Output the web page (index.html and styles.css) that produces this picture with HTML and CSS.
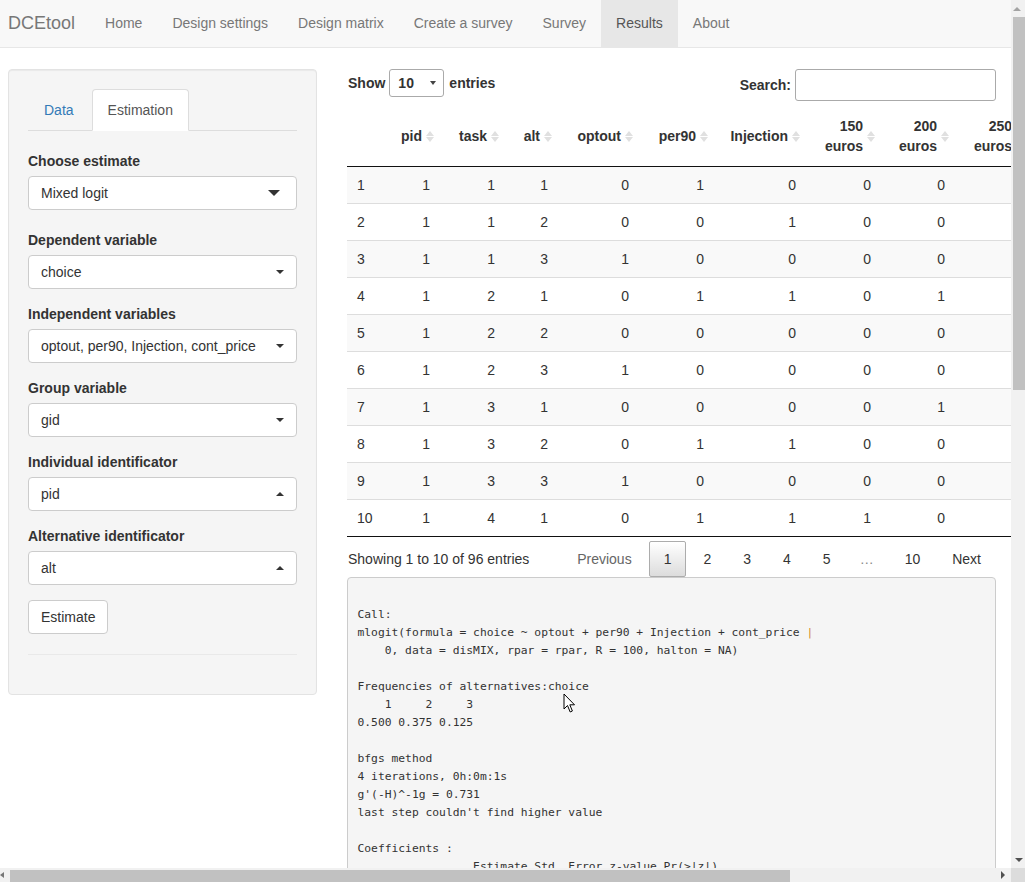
FILE: index.html
```html
<!DOCTYPE html>
<html lang="en">
<head>
<meta charset="utf-8">
<title>DCEtool</title>
<link rel="stylesheet" href="styles.css">
</head>
<body>
<div class="screen">
  <div class="viewport">
    <nav class="navbar">
      <span class="brand">DCEtool</span>
      <ul class="nav">
        <li class="nav-link">Home</li>
        <li class="nav-link">Design settings</li>
        <li class="nav-link">Design matrix</li>
        <li class="nav-link">Create a survey</li>
        <li class="nav-link">Survey</li>
        <li class="nav-link active">Results</li>
        <li class="nav-link">About</li>
      </ul>
    </nav>

    <div class="layout">
      <aside class="well">
        <ul class="tabs">
          <li class="tab">Data</li>
          <li class="tab active">Estimation</li>
        </ul>
        <div class="tab-content">
          <div class="form-group first">
            <label class="control-label">Choose estimate</label>
            <div class="select"><span>Mixed logit</span><span class="caret big"></span></div>
          </div>
          <div class="form-group">
            <label class="control-label">Dependent variable</label>
            <div class="select"><span>choice</span><span class="caret"></span></div>
          </div>
          <div class="form-group">
            <label class="control-label">Independent variables</label>
            <div class="select"><span>optout, per90, Injection, cont_price</span><span class="caret"></span></div>
          </div>
          <div class="form-group">
            <label class="control-label">Group variable</label>
            <div class="select"><span>gid</span><span class="caret"></span></div>
          </div>
          <div class="form-group">
            <label class="control-label">Individual identificator</label>
            <div class="select"><span>pid</span><span class="caret up"></span></div>
          </div>
          <div class="form-group">
            <label class="control-label">Alternative identificator</label>
            <div class="select"><span>alt</span><span class="caret up"></span></div>
          </div>
          <button class="btn" type="button">Estimate</button>
          <hr class="rule">
        </div>
      </aside>

      <main class="main">
        <div class="dt-top">
          <div class="dt-length">
            <span>Show</span>
            <div class="len-select"><span>10</span><span class="mini-caret"></span></div>
            <span>entries</span>
          </div>
          <div class="dt-filter">
            <span>Search:</span>
            <div class="search-input"></div>
          </div>
        </div>

        <table class="dt-table">
          <colgroup>
            <col class="w37"><col class="w56"><col class="w65"><col class="w53"><col class="w81"><col class="w75"><col class="w92"><col class="w75"><col class="w74"><col class="w75">
          </colgroup>
          <thead>
            <tr>
              <th class="rn"></th>
              <th>pid<span class="sort"></span></th>
              <th>task<span class="sort"></span></th>
              <th>alt<span class="sort"></span></th>
              <th>optout<span class="sort"></span></th>
              <th>per90<span class="sort"></span></th>
              <th>Injection<span class="sort"></span></th>
              <th>150 euros<span class="sort"></span></th>
              <th>200 euros<span class="sort"></span></th>
              <th>250 euros<span class="sort"></span></th>
            </tr>
          </thead>
          <tbody>
            <tr class="odd"><td class="rn">1</td><td>1</td><td>1</td><td>1</td><td>0</td><td>1</td><td>0</td><td>0</td><td>0</td><td>0</td></tr>
            <tr><td class="rn">2</td><td>1</td><td>1</td><td>2</td><td>0</td><td>0</td><td>1</td><td>0</td><td>0</td><td>1</td></tr>
            <tr class="odd"><td class="rn">3</td><td>1</td><td>1</td><td>3</td><td>1</td><td>0</td><td>0</td><td>0</td><td>0</td><td>0</td></tr>
            <tr><td class="rn">4</td><td>1</td><td>2</td><td>1</td><td>0</td><td>1</td><td>1</td><td>0</td><td>1</td><td>0</td></tr>
            <tr class="odd"><td class="rn">5</td><td>1</td><td>2</td><td>2</td><td>0</td><td>0</td><td>0</td><td>0</td><td>0</td><td>0</td></tr>
            <tr><td class="rn">6</td><td>1</td><td>2</td><td>3</td><td>1</td><td>0</td><td>0</td><td>0</td><td>0</td><td>0</td></tr>
            <tr class="odd"><td class="rn">7</td><td>1</td><td>3</td><td>1</td><td>0</td><td>0</td><td>0</td><td>0</td><td>1</td><td>0</td></tr>
            <tr><td class="rn">8</td><td>1</td><td>3</td><td>2</td><td>0</td><td>1</td><td>1</td><td>0</td><td>0</td><td>1</td></tr>
            <tr class="odd"><td class="rn">9</td><td>1</td><td>3</td><td>3</td><td>1</td><td>0</td><td>0</td><td>0</td><td>0</td><td>0</td></tr>
            <tr><td class="rn">10</td><td>1</td><td>4</td><td>1</td><td>0</td><td>1</td><td>1</td><td>1</td><td>0</td><td>0</td></tr>
          </tbody>
        </table>

        <div class="dt-bottom">
          <div class="dt-info">Showing 1 to 10 of 96 entries</div>
          <div class="paginate">
            <span class="pg disabled">Previous</span>
            <span class="pg current">1</span>
            <span class="pg">2</span>
            <span class="pg">3</span>
            <span class="pg">4</span>
            <span class="pg">5</span>
            <span class="ellipsis">…</span>
            <span class="pg">10</span>
            <span class="pg">Next</span>
          </div>
        </div>

<pre class="output">

Call:
mlogit(formula = choice ~ optout + per90 + Injection + cont_price <span class="bar">|</span>
    0, data = disMIX, rpar = rpar, R = 100, halton = NA)

Frequencies of alternatives:choice
    1     2     3
0.500 0.375 0.125

bfgs method
4 iterations, 0h:0m:1s
g'(-H)^-1g = 0.731
last step couldn't find higher value

Coefficients :
                 Estimate Std. Error z-value Pr(&gt;|z|)
optout          -1.602521   0.585913 -2.7351  0.006236 **
per90            0.871425   0.412308  2.1135  0.034556 *
Injection        0.512874   0.398164  1.2881  0.197707
cont_price      -0.004519   0.002187 -2.0663  0.038799 *
</pre>
      </main>
    </div>
  </div>

  <div class="vscroll">
    <div class="sb-btn"><span class="tri-up"></span></div>
    <div class="vthumb"></div>
    <div class="sb-fill"></div>
    <div class="sb-btn"><span class="tri-down"></span></div>
  </div>
  <div class="hscroll">
    <span class="tri-left"></span>
    <div class="hthumb"></div>
    <div class="sb-fill"></div>
    <span class="tri-right"></span>
  </div>
  <div class="corner"></div>

  <svg class="cursor" width="14" height="21" viewBox="0 0 14 21" aria-hidden="true">
    <path d="M1 1 L1 16 L4.5 12.5 L7.2 19 L9.4 18 L6.8 11.8 L11.5 11.8 Z" fill="#fff" stroke="#000" stroke-width="1" stroke-linejoin="miter"/>
  </svg>
</div>
</body>
</html>
```

FILE: styles.css
```css
* { box-sizing: border-box; }

html, body {
  margin: 0;
  padding: 0;
}

body {
  font-family: "Liberation Sans", Arial, Helvetica, sans-serif;
  font-size: 14px;
  line-height: 20px;
  color: #333;
  background: #fff;
  overflow: hidden;
}

.screen {
  position: relative;
  display: grid;
  grid-template-columns: 1011px 14px;
  grid-template-rows: 868px 14px;
  width: 1025px;
  height: 882px;
}

.viewport {
  overflow: hidden;
  background: #fff;
}

/* navbar */
.navbar {
  display: flex;
  height: 48px;
  padding-bottom: 1px;
  background: #f8f8f8;
  border-bottom: 1px solid #e7e7e7;
}

.brand {
  display: flex;
  align-items: center;
  padding: 0 15px 0 8px;
  font-size: 18px;
  color: #777;
}

.nav {
  display: flex;
  list-style: none;
  margin: 0 0 -1px;
  padding: 0;
}

.nav-link {
  display: flex;
  align-items: center;
  padding: 0 15px 1px;
  color: #777;
}

.nav-link.active {
  background: #e7e7e7;
  color: #555;
}

/* layout */
.layout {
  display: flex;
  align-items: flex-start;
  gap: 30px;
  padding: 21px 0 0 8px;
}

.well {
  flex: none;
  width: 309px;
  padding: 19px;
  background: #f5f5f5;
  border: 1px solid #e3e3e3;
  border-radius: 4px;
  box-shadow: inset 0 1px 1px rgba(0, 0, 0, 0.05);
}

.tabs {
  display: flex;
  list-style: none;
  margin: 0;
  padding: 0;
  border-bottom: 1px solid #ddd;
}

.tab {
  padding: 10px 15px;
  margin-right: 2px;
  margin-bottom: -1px;
  border: 1px solid transparent;
  border-radius: 4px 4px 0 0;
  color: #337ab7;
}

.tab.active {
  background: #fff;
  border-color: #ddd #ddd transparent;
  color: #555;
}

.tab-content {
  padding-top: 20px;
}

.form-group {
  margin-bottom: 15px;
}

.form-group.first {
  margin-bottom: 20px;
}

.control-label {
  display: block;
  margin-bottom: 5px;
  font-weight: bold;
}

.select {
  display: flex;
  align-items: center;
  justify-content: space-between;
  height: 34px;
  padding: 6px 12px;
  background: #fff;
  border: 1px solid #ccc;
  border-radius: 4px;
  color: #333;
}

.caret {
  width: 0;
  height: 0;
  border-left: 4px solid transparent;
  border-right: 4px solid transparent;
  border-top: 4px solid #333;
}

.caret.big {
  margin-right: 4px;
  border-left-width: 6px;
  border-right-width: 6px;
  border-top-width: 6px;
}

.caret.up {
  border-top: 0;
  border-bottom: 4px solid #333;
}

.btn {
  display: block;
  height: 34px;
  padding: 6px 12px;
  font-family: inherit;
  font-size: 14px;
  line-height: 20px;
  color: #333;
  background: #fff;
  border: 1px solid #ccc;
  border-radius: 4px;
}

.rule {
  margin: 20px 0;
  border: 0;
  border-top: 1px solid #e9e9e9;
}

/* main */
.main {
  flex: none;
  width: 649px;
}

.dt-top {
  display: flex;
  justify-content: space-between;
  align-items: flex-start;
}

.dt-length {
  display: flex;
  align-items: center;
  height: 28px;
  padding-left: 1px;
  font-weight: bold;
}

.len-select {
  display: flex;
  align-items: center;
  justify-content: space-between;
  width: 55px;
  height: 28px;
  margin: 0 5px 0 4px;
  padding: 0 7px 0 8px;
  border: 1px solid #aaa;
  border-radius: 3px;
  background: #fff;
}

.mini-caret {
  width: 0;
  height: 0;
  border-left: 3px solid transparent;
  border-right: 3px solid transparent;
  border-top: 4px solid #444;
}

.dt-filter {
  display: flex;
  align-items: center;
  font-weight: bold;
}

.search-input {
  width: 201px;
  height: 32px;
  margin-left: 4px;
  background: #fff;
  border: 1px solid #aaa;
  border-radius: 3px;
}

.dt-table {
  margin-top: 5px;
  width: 683px;
  table-layout: fixed;
  border-collapse: separate;
  border-spacing: 0;
}

.w37 { width: 37px; }
.w53 { width: 53px; }
.w56 { width: 56px; }
.w65 { width: 65px; }
.w74 { width: 74px; }
.w75 { width: 75px; }
.w81 { width: 81px; }
.w92 { width: 92px; }

.dt-table th {
  position: relative;
  padding: 10px 18px 10px 10px;
  font-weight: bold;
  text-align: right;
  vertical-align: middle;
  border-bottom: 1px solid #111;
}

.dt-table th.rn,
.dt-table td.rn {
  text-align: left;
}

.dt-table td {
  padding: 8px 10px;
  text-align: right;
  border-top: 1px solid #ddd;
  white-space: nowrap;
}

.dt-table tbody tr:first-child td {
  border-top: 0;
}

.dt-table tbody tr:last-child td {
  border-bottom: 1px solid #111;
}

.dt-table tr.odd td {
  background: #f9f9f9;
}

.sort {
  position: absolute;
  right: 6px;
  top: 50%;
  width: 8px;
  height: 11px;
  margin-top: -5px;
}

.sort::before,
.sort::after {
  content: "";
  position: absolute;
  left: 0;
  width: 0;
  height: 0;
  border-left: 4px solid transparent;
  border-right: 4px solid transparent;
}

.sort::before {
  top: 0;
  border-bottom: 5px solid #e0e0e0;
}

.sort::after {
  bottom: 0;
  border-top: 5px solid #e0e0e0;
}

.dt-bottom {
  display: flex;
  justify-content: space-between;
  align-items: center;
  padding-top: 4px;
}

.dt-info {
  padding-left: 1px;
}

.paginate {
  display: flex;
  align-items: center;
}

.pg {
  min-width: 21px;
  margin-left: 2px;
  padding: 7px 14px;
  text-align: center;
  color: #333;
  border: 1px solid transparent;
  border-radius: 2px;
}

.pg.disabled {
  color: #666;
}

.pg.current {
  border-color: #acacac;
  background: linear-gradient(to bottom, #fff 0%, #dcdcdc 100%);
}

.ellipsis {
  padding: 0 14px;
  color: #888;
}

.output {
  margin: 0;
  padding: 9.5px;
  font-family: "DejaVu Sans Mono", "Liberation Mono", monospace;
  font-size: 11.3px;
  line-height: 18px;
  color: #333;
  background: #f5f5f5;
  border: 1px solid #ccc;
  border-radius: 4px;
  white-space: pre;
  overflow: hidden;
}

.bar {
  color: #d58a1e;
}

/* scrollbars */
.vscroll {
  display: flex;
  flex-direction: column;
  align-items: flex-end;
  background: #f1f1f1;
}

.sb-btn {
  display: flex;
  align-items: center;
  justify-content: center;
  width: 14px;
  height: 17px;
  flex: none;
}

.vthumb {
  width: 12px;
  height: 373px;
  background: #c1c1c1;
  flex: none;
}

.sb-fill {
  flex: 1;
}

.tri-up {
  width: 0;
  height: 0;
  border-left: 4px solid transparent;
  border-right: 4px solid transparent;
  border-bottom: 4px solid #a3a3a3;
  margin-left: -2px;
}

.tri-down {
  width: 0;
  height: 0;
  border-left: 4px solid transparent;
  border-right: 4px solid transparent;
  border-top: 4px solid #505050;
  margin-left: 2px;
}

.hscroll {
  display: flex;
  align-items: center;
  background: #f1f1f1;
}

.tri-left {
  width: 0;
  height: 0;
  border-top: 3px solid transparent;
  border-bottom: 3px solid transparent;
  border-right: 4px solid #777;
}

.hthumb {
  align-self: flex-end;
  width: 780px;
  height: 12px;
  margin-left: 6px;
  background: #c1c1c1;
}

.tri-right {
  width: 0;
  height: 0;
  margin-right: 6px;
  border-top: 4px solid transparent;
  border-bottom: 4px solid transparent;
  border-left: 4px solid #505050;
}

.corner {
  background: #dcdcdc;
}

.cursor {
  position: absolute;
  left: 563px;
  top: 693px;
}
```
